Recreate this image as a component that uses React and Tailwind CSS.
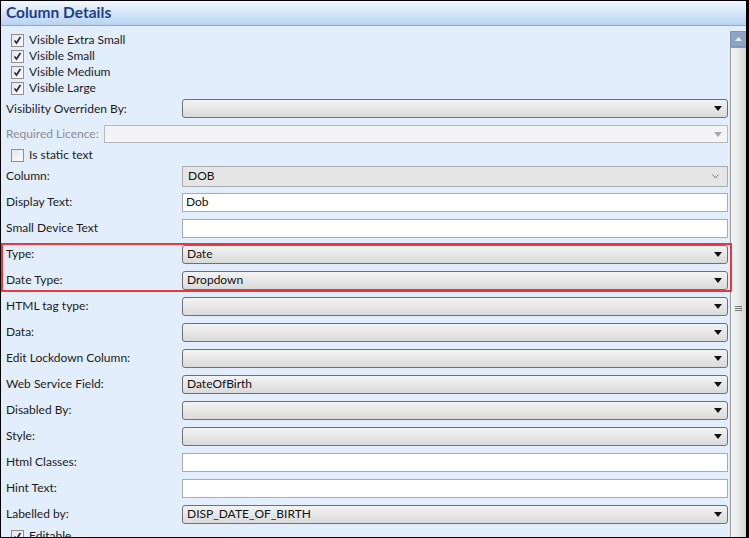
import React from "react";

const FONT = { fontFamily: "Lato, 'Open Sans', sans-serif" };

function Check({ checked, label }) {
  return (
    <div className="flex h-4 items-center pl-[10px] text-[12px] text-[#1b1b1b]">
      <span className="flex h-[13px] w-[13px] items-center justify-center border border-[#8f8f8f] bg-gradient-to-br from-[#e6e6e6] to-[#fbfbfb]">
        {checked && (
          <svg width="9" height="9" viewBox="0 0 9 9">
            <path d="M1.5 4.5 L3.5 7 L7.5 1" fill="none" stroke="#2a2d6e" strokeWidth="1.8" />
          </svg>
        )}
      </span>
      <span className="ml-[5px] whitespace-nowrap">{label}</span>
    </div>
  );
}

function Arrow({ disabled }) {
  return (
    <svg width="8" height="5" viewBox="0 0 8 5" className="mr-[5px]">
      <path d="M0 0 H8 L4 5 Z" fill={disabled ? "#a8a8a8" : "#111"} />
    </svg>
  );
}

function Select({ value }) {
  return (
    <div className="flex h-[19px] flex-1 items-center justify-between rounded-[3px] border border-[#707070] bg-gradient-to-b from-[#f3f3f3] to-[#dadada] pl-1 text-[12px] text-[#111]">
      <span>{value}</span>
      <Arrow />
    </div>
  );
}

function Input({ value }) {
  return (
    <div className="flex h-[19px] flex-1 items-center border border-[#a9abb0] bg-white pl-[3px] text-[12px] text-[#111]">
      {value}
    </div>
  );
}

function Row({ label, children }) {
  return (
    <div className="flex h-[26px] items-center">
      <div className="w-[181px] shrink-0 whitespace-nowrap pl-[5px] text-[12px] text-[#1b1b1b]">{label}</div>
      {children}
    </div>
  );
}

export default function App() {
  return (
    <div style={FONT} className="relative h-[538px] w-[749px] overflow-hidden border-t border-l border-r-[3px] border-b border-black bg-[#e3eefc]">
      <div className="flex h-[25px] items-center border-b border-[#82ade0] bg-gradient-to-b from-[#f3f8fe] to-[#b7d3f2] pl-[5px]">
        <span className="text-[15.5px] font-bold text-[#1d3d8c]">Column Details</span>
      </div>

      <div className="flex">
        <div className="w-[727px] shrink-0">
          <div className="pt-[6px]">
            <Check checked label="Visible Extra Small" />
            <Check checked label="Visible Small" />
            <Check checked label="Visible Medium" />
            <Check checked label="Visible Large" />
          </div>

          <div className="flex h-[25px] items-center">
            <div className="w-[181px] shrink-0 whitespace-nowrap pl-[5px] text-[12px] text-[#1b1b1b]">Visibility Overriden By:</div>
            <Select value="" />
          </div>

          <div className="flex h-[26px] items-center">
            <div className="w-[103px] shrink-0 whitespace-nowrap pl-[5px] text-[12px] text-[#8d8d8d]">Required Licence:</div>
            <div className="flex h-[18px] flex-1 items-center justify-end border border-[#b7b9bc] bg-[#f4f4f4]">
              <Arrow disabled />
            </div>
          </div>

          <Check label="Is static text" />

          <Row label="Column:">
            <div className="flex h-[21px] flex-1 items-center justify-between border border-[#acacac] bg-[#e5e5e5] pl-[5px] text-[12px] text-[#111]">
              <span>DOB</span>
              <svg width="7" height="5" viewBox="0 0 7 5" className="mr-[8px]">
                <path d="M0.5 0.5 L3.5 4 L6.5 0.5" fill="none" stroke="#777" strokeWidth="1" />
              </svg>
            </div>
          </Row>

          <Row label="Display Text:">
            <Input value="Dob" />
          </Row>
          <Row label="Small Device Text">
            <Input value="" />
          </Row>
          <Row label="Type:">
            <Select value="Date" />
          </Row>
          <Row label="Date Type:">
            <Select value="Dropdown" />
          </Row>
          <Row label="HTML tag type:">
            <Select value="" />
          </Row>
          <Row label="Data:">
            <Select value="" />
          </Row>
          <Row label="Edit Lockdown Column:">
            <Select value="" />
          </Row>
          <Row label="Web Service Field:">
            <Select value="DateOfBirth" />
          </Row>
          <Row label="Disabled By:">
            <Select value="" />
          </Row>
          <Row label="Style:">
            <Select value="" />
          </Row>
          <Row label="Html Classes:">
            <Input value="" />
          </Row>
          <Row label="Hint Text:">
            <Input value="" />
          </Row>
          <Row label="Labelled by:">
            <Select value="DISP_DATE_OF_BIRTH" />
          </Row>
          <div className="pt-[1px]">
            <Check checked label="Editable" />
          </div>
        </div>

        {/* scrollbar */}
        <div className="ml-[2px] mt-[5px] flex w-[17px] shrink-0 flex-col">
          <div className="flex h-[16px] items-center justify-center border border-[#7d93b6] bg-[#8fa4c4]">
            <svg width="7" height="4" viewBox="0 0 7 4">
              <path d="M0 4 L3.5 0 L7 4 Z" fill="#e8eef8" />
            </svg>
          </div>
          <div className="flex h-[520px] flex-col items-center border border-[#9a9a9a] bg-gradient-to-r from-[#f4f4f4] via-[#e9e9e9] to-[#d4d4d4] pt-[258px]">
            <div className="h-[1px] w-[7px] bg-[#777]" />
            <div className="mt-[1px] h-[1px] w-[7px] bg-[#777]" />
            <div className="mt-[1px] h-[1px] w-[7px] bg-[#777]" />
          </div>
        </div>
      </div>

      {/* annotation highlight */}
      <div className="pointer-events-none absolute left-0 top-[242px] h-[49px] w-[731px] border-[2px] border-[#e8383f]" />
    </div>
  );
}
